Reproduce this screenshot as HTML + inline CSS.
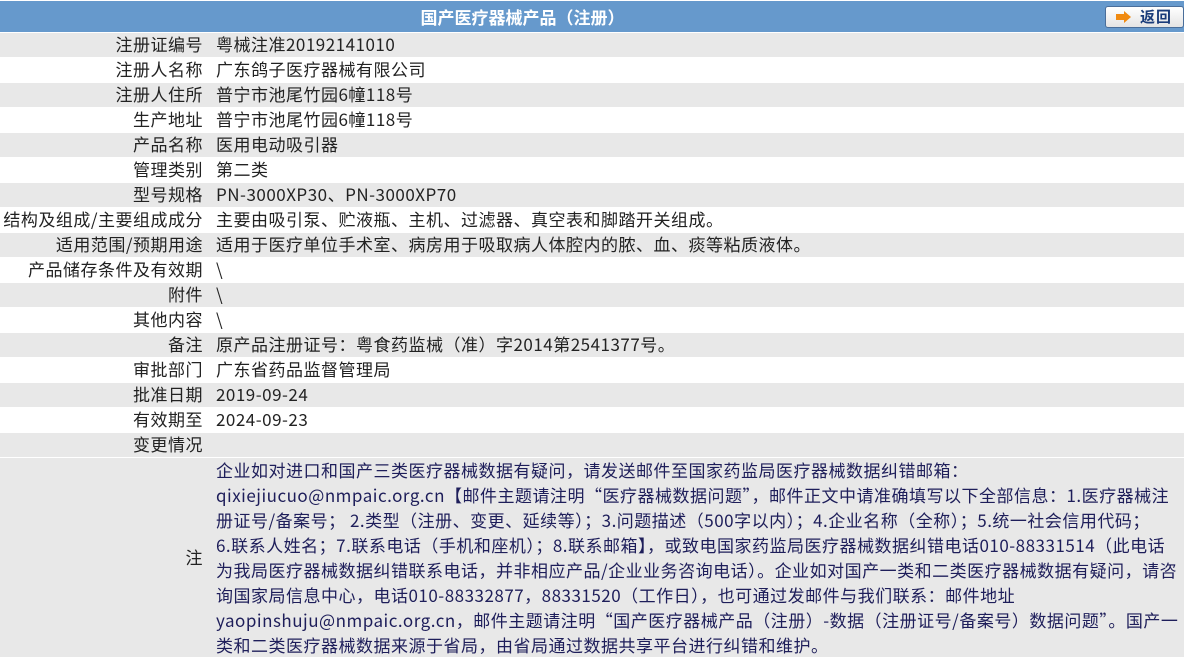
<!DOCTYPE html>
<html><head><meta charset="utf-8"><style>
body{margin:0;width:1184px;height:659px;overflow:hidden;background:#fff;font-family:"Noto Sans CJK SC","Liberation Sans",sans-serif;font-size:17px;color:#222;letter-spacing:0.5px;}
.hd{position:absolute;left:0;top:1px;width:1184px;height:31px;background:#6699cc;}
.hd .t{position:absolute;left:0;width:1045px;text-align:center;top:5px;color:#fff;font-weight:bold;font-size:17px;line-height:22px;letter-spacing:0;}
.btn{position:absolute;left:1105px;top:5px;width:79px;height:22px;border:1px solid #4a6e9a;border-radius:3px;background:linear-gradient(#fff,#e4e4e4);box-sizing:border-box;}
.btn .ar{position:absolute;left:10px;top:4px;}
.btn .tx{position:absolute;left:34px;top:0px;font-weight:bold;color:#1a3c7a;font-size:15px;line-height:19px;letter-spacing:1px;}
.r{position:absolute;left:0;width:1184px;height:24px;line-height:22px;}
.g{background:#e8e8e8;}
.l{position:absolute;right:981px;white-space:nowrap;letter-spacing:0.5px;}
.v{position:absolute;left:216px;white-space:nowrap;}
.note{position:absolute;left:0;top:458px;width:1184px;height:199px;background:#e8e8e8;overflow:hidden;}
.note .l{top:88px;line-height:22px;}
.note .v{top:-1px;line-height:25px;color:#1e1e5a;}
</style></head><body>
<div class="hd"><div class="t">国产医疗器械产品（注册）</div>
<div class="btn"><svg class="ar" width="16" height="12" viewBox="0 0 16 12"><path d="M0 3h8V0l7 6-7 6V9H0z" fill="#f08a10"/></svg><span class="tx">返回</span></div></div>
<div class="r g" style="top:33px"><span class="l">注册证编号</span><span class="v">粤械注准20192141010</span></div>
<div class="r" style="top:58px"><span class="l">注册人名称</span><span class="v">广东鸽子医疗器械有限公司</span></div>
<div class="r g" style="top:83px"><span class="l">注册人住所</span><span class="v">普宁市池尾竹园6幢118号</span></div>
<div class="r" style="top:108px"><span class="l">生产地址</span><span class="v">普宁市池尾竹园6幢118号</span></div>
<div class="r g" style="top:133px"><span class="l">产品名称</span><span class="v">医用电动吸引器</span></div>
<div class="r" style="top:158px"><span class="l">管理类别</span><span class="v">第二类</span></div>
<div class="r g" style="top:183px"><span class="l">型号规格</span><span class="v">PN-3000XP30、PN-3000XP70</span></div>
<div class="r" style="top:208px"><span class="l">结构及组成/主要组成成分</span><span class="v">主要由吸引泵、贮液瓶、主机、过滤器、真空表和脚踏开关组成。</span></div>
<div class="r g" style="top:233px"><span class="l">适用范围/预期用途</span><span class="v">适用于医疗单位手术室、病房用于吸取病人体腔内的脓、血、痰等粘质液体。</span></div>
<div class="r" style="top:258px"><span class="l">产品储存条件及有效期</span><span class="v">\</span></div>
<div class="r g" style="top:283px"><span class="l">附件</span><span class="v">\</span></div>
<div class="r" style="top:308px"><span class="l">其他内容</span><span class="v">\</span></div>
<div class="r g" style="top:333px"><span class="l">备注</span><span class="v">原产品注册证号：粤食药监械（准）字2014第2541377号。</span></div>
<div class="r" style="top:358px"><span class="l">审批部门</span><span class="v">广东省药品监督管理局</span></div>
<div class="r g" style="top:383px"><span class="l">批准日期</span><span class="v">2019-09-24</span></div>
<div class="r" style="top:408px"><span class="l">有效期至</span><span class="v">2024-09-23</span></div>
<div class="r g" style="top:433px"><span class="l">变更情况</span></div>
<div class="note"><span class="l">注</span><div class="v">企业如对进口和国产三类医疗器械数据有疑问，请发送邮件至国家药监局医疗器械数据纠错邮箱：<br>qixiejiucuo@nmpaic.org.cn【邮件主题请注明“医疗器械数据问题”，邮件正文中请准确填写以下全部信息：1.医疗器械注<br>册证号/备案号； 2.类型（注册、变更、延续等）；3.问题描述（500字以内）；4.企业名称（全称）；5.统一社会信用代码；<br>6.联系人姓名；7.联系电话（手机和座机）；8.联系邮箱】，或致电国家药监局医疗器械数据纠错电话010-88331514（此电话<br>为我局医疗器械数据纠错联系电话，并非相应产品/企业业务咨询电话）。企业如对国产一类和二类医疗器械数据有疑问，请咨<br>询国家局信息中心，电话010-88332877，88331520（工作日），也可通过发邮件与我们联系：邮件地址<br>yaopinshuju@nmpaic.org.cn，邮件主题请注明“国产医疗器械产品（注册）-数据（注册证号/备案号）数据问题”。国产一<br>类和二类医疗器械数据来源于省局，由省局通过数据共享平台进行纠错和维护。</div></div>
</body></html>
